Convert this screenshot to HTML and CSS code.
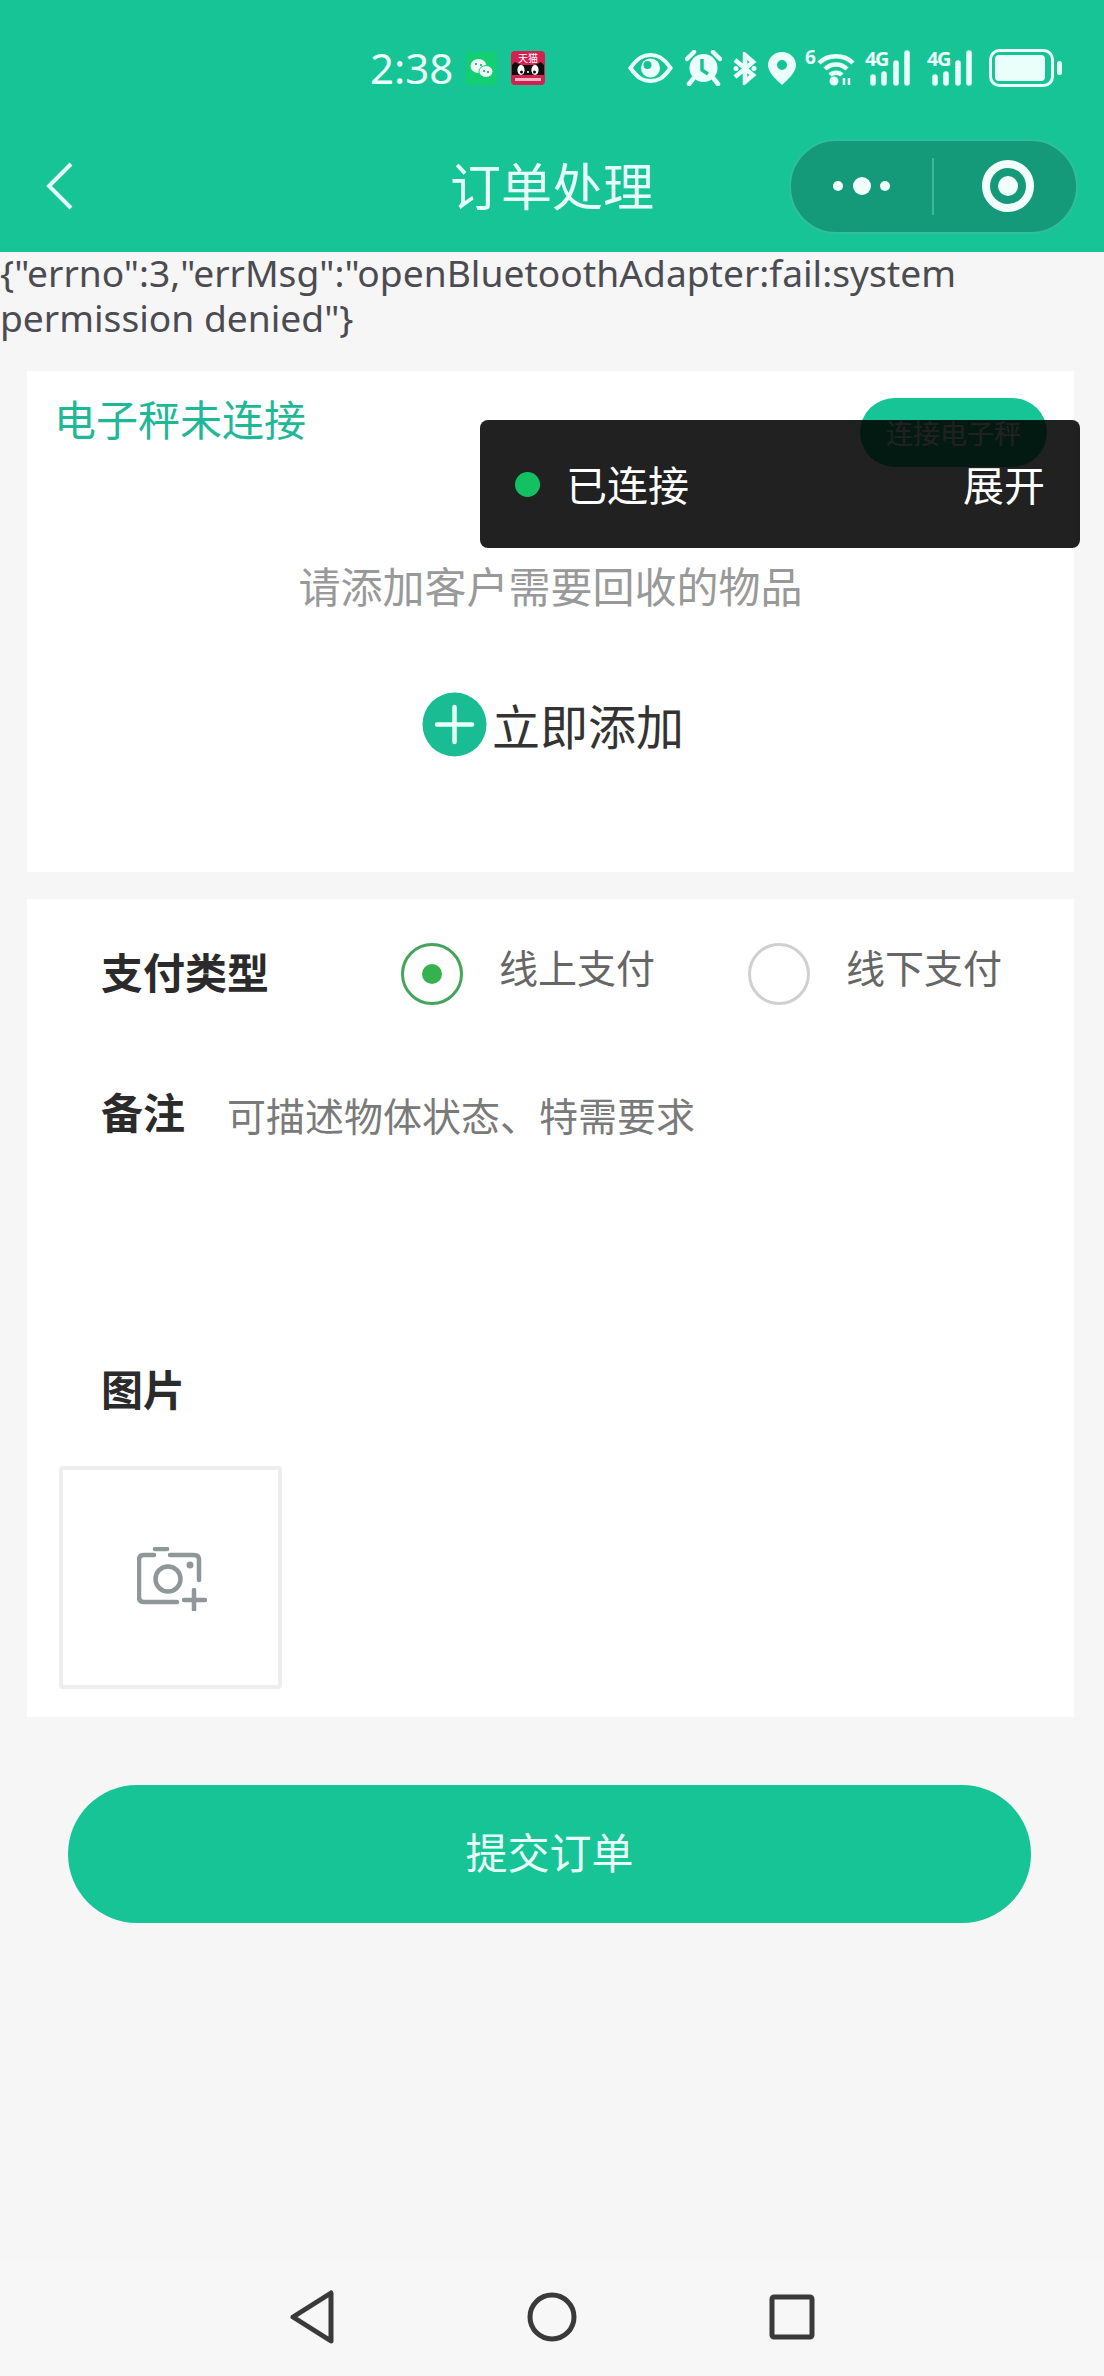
FILE: index.html
```html
<!DOCTYPE html>
<html lang="zh-CN">
<head>
<meta charset="utf-8">
<title>订单处理</title>
<link rel="stylesheet" href="styles.css">
</head>
<body>
<div class="page">
  <header class="header">
    <div class="status">
      <span class="time">2:38</span>
      <svg class="st-wechat" width="31" height="33" viewBox="0 0 31 33"><rect width="31" height="33" rx="3" fill="#12cf73"/><ellipse cx="12.5" cy="14" rx="8" ry="7" fill="#eefbf4"/><ellipse cx="20" cy="19.5" rx="7" ry="6" fill="#eefbf4" stroke="#12cf73"/><circle cx="10" cy="12" r="1" fill="#12a060"/><circle cx="15" cy="13" r="1" fill="#12a060"/><circle cx="18" cy="19" r="1" fill="#12a060"/><circle cx="22" cy="20" r="1" fill="#12a060"/></svg>
      <svg class="st-tmall" width="34" height="34" viewBox="0 0 34 34"><rect width="34" height="34" rx="4" fill="#d4204f"/><path d="M1 24 V14 L4 11 L10 14 H24 L30 11 L33 14 V24Z" fill="#0e0e0e"/><text x="17" y="10.500" class="tm-text" text-anchor="middle">天猫</text><ellipse cx="10" cy="19" rx="3.600" ry="5" fill="#fff"/><ellipse cx="24" cy="19" rx="3.600" ry="5" fill="#fff"/><circle cx="10.500" cy="21" r="1.500" fill="#0e0e0e"/><circle cx="23.500" cy="21" r="1.500" fill="#0e0e0e"/><circle cx="17" cy="21" r="1" fill="#fff"/><rect x="4" y="27" width="26" height="3" fill="#f3b4c5"/></svg>
      <svg class="st-eye" width="45" height="32" viewBox="0 0 45 32"><path d="M2.500 16 C10 5 16 3 22.500 3 C29 3 35 5 42.500 16 C35 27 29 29 22.500 29 C16 29 10 27 2.500 16Z" fill="none" stroke="#eafff9" stroke-width="4"/><circle cx="22.500" cy="16" r="9.500" fill="#eafff9"/><circle cx="19.500" cy="13" r="4" fill="#17c495"/></svg>
      <svg class="st-alarm" width="37" height="36" viewBox="0 0 37 36"><path d="M2 9 L9 2 M35 9 L28 2" stroke="#eafff9" stroke-width="4.500" stroke-linecap="round"/><circle cx="18.500" cy="18" r="14" fill="#eafff9"/><path d="M17 9 V20 L23 24" fill="none" stroke="#17c495" stroke-width="3.500"/><path d="M8 29 L4 34 M29 29 L33 34" stroke="#eafff9" stroke-width="4.500" stroke-linecap="round"/></svg>
      <svg class="st-bt" width="26" height="33" viewBox="0 0 26 33"><path d="M3 8 L21 23 L13 30 V3 L21 10 L3 25" fill="none" stroke="#eafff9" stroke-width="4.500"/><circle cx="4" cy="16.500" r="2.500" fill="#eafff9"/><circle cx="22" cy="16.500" r="2.500" fill="#eafff9"/></svg>
      <svg class="st-pin" width="30" height="35" viewBox="0 0 30 35"><path fill-rule="evenodd" d="M15 1 C7 1 1 7 1 14 C1 22 10 29 15 34 C20 29 29 22 29 14 C29 7 23 1 15 1Z M15 9 A5 5 0 1 1 15 19 A5 5 0 1 1 15 9Z" fill="#eafff9"/></svg>
      <span class="st-wifi">
        <span class="st-six">6</span>
        <svg width="38" height="36" viewBox="0 0 38 36"><path d="M2 12 C11 3 27 3 36 12 M8 18 C14 12 24 12 30 18 M13 24 C16 21 22 21 25 24" fill="none" stroke="#eafff9" stroke-width="4.500"/><circle cx="17" cy="30" r="4.500" fill="#eafff9"/><path d="M27 27 V34 M32 27 V34" stroke="#eafff9" stroke-width="2.500"/></svg>
      </span>
      <span class="st-signal">
        <span class="st-4g">4G</span>
        <svg width="50" height="36" viewBox="0 0 50 36"><path d="M8 27 V33 M19 24 V33 M31 13 V33 M42 3 V33" stroke="#eafff9" stroke-width="5.500" stroke-linecap="round"/></svg>
      </span>
      <span class="st-signal st-signal-two">
        <span class="st-4g">4G</span>
        <svg width="50" height="36" viewBox="0 0 50 36"><path d="M8 27 V33 M19 24 V33 M31 13 V33 M42 3 V33" stroke="#eafff9" stroke-width="5.500" stroke-linecap="round"/></svg>
      </span>
      <svg class="st-batt" width="74" height="38" viewBox="0 0 74 38"><rect x="1.500" y="1.500" width="62" height="35" rx="9" fill="none" stroke="#eafff9" stroke-width="3"/><rect x="6" y="6" width="50" height="26" rx="4" fill="#eafff9"/><rect x="68" y="12" width="5" height="14" rx="2.500" fill="#eafff9"/></svg>
    </div>
    <nav class="nav">
      <div class="nav-left">
        <svg width="27" height="48" viewBox="0 0 27 48"><path d="M25 2 L3 24 L25 46" fill="none" stroke="#e6fff8" stroke-width="4"/></svg>
      </div>
      <div class="nav-title">订单处理</div>
      <div class="nav-right">
        <div class="capsule">
          <span class="cap-half">
            <svg width="60" height="20" viewBox="0 0 60 20"><circle cx="6" cy="10" r="5" fill="#f2fffb"/><circle cx="30" cy="10" r="9" fill="#f2fffb"/><circle cx="53" cy="10" r="5" fill="#f2fffb"/></svg>
          </span>
          <span class="cap-line"></span>
          <span class="cap-half cap-half-right">
            <svg width="54" height="54" viewBox="0 0 54 54"><circle cx="27" cy="27" r="22" fill="none" stroke="#f2fffb" stroke-width="8"/><circle cx="27" cy="27" r="10" fill="#f2fffb"/></svg>
          </span>
        </div>
      </div>
    </nav>
  </header>

  <p class="err">{"errno":3,"errMsg":"openBluetoothAdapter:fail:system permission denied"}</p>

  <section class="card card-add">
    <div class="scale-row">
      <span class="scale-state">电子秤未连接</span>
      <span class="scale-btn">连接电子秤</span>
    </div>
    <div class="hint">请添加客户需要回收的物品</div>
    <div class="add-row">
      <svg class="add-ico" width="65" height="65" viewBox="0 0 65 65"><circle cx="32.500" cy="32.500" r="32" fill="#1abc94"/><path d="M15 32.500 H50 M32.500 15 V50" stroke="#e9fff9" stroke-width="4.500" stroke-linecap="round"/></svg>
      <span class="add-text">立即添加</span>
    </div>
  </section>

  <section class="card card-form">
    <div class="pay-row">
      <span class="f-label pay-label">支付类型</span>
      <div class="pay-opts">
        <div class="pay-opt">
          <span class="radio radio-on"><span class="radio-dot"></span></span>
          <span class="pay-text">线上支付</span>
        </div>
        <div class="pay-opt">
          <span class="radio"></span>
          <span class="pay-text">线下支付</span>
        </div>
      </div>
    </div>
    <div class="note-row">
      <span class="f-label">备注</span>
      <span class="note-ph">可描述物体状态、特需要求</span>
    </div>
    <div class="f-label img-label">图片</div>
    <div class="upload">
      <svg width="70" height="64" viewBox="0 0 70 64"><path d="M17 8 H7 Q2 8 2 13 V50 Q2 55 7 55 H40 M33 8 H57 Q62 8 62 13 V33 M18 2 H30" fill="none" stroke="#8f9799" stroke-width="4.500" stroke-linecap="round"/><circle cx="31" cy="32" r="12.500" fill="none" stroke="#8f9799" stroke-width="4.500"/><circle cx="53" cy="18" r="3.500" fill="#8f9799"/><path d="M47 53 H68 M57 43 V63" stroke="#8f9799" stroke-width="4.500" stroke-linecap="round"/></svg>
    </div>
  </section>

  <div class="submit">提交订单</div>

  <div class="sysnav">
    <svg width="60" height="56" viewBox="0 0 60 56"><path d="M11 28 L49 4 V52Z" fill="none" stroke="#3a3a3a" stroke-width="5" stroke-linejoin="round"/></svg>
    <svg width="60" height="56" viewBox="0 0 60 56"><circle cx="30" cy="28" r="22" fill="none" stroke="#3a3a3a" stroke-width="5"/></svg>
    <svg width="60" height="56" viewBox="0 0 60 56"><rect x="10" y="8" width="40" height="40" rx="2" fill="none" stroke="#3a3a3a" stroke-width="5"/></svg>
  </div>

  <div class="toast">
    <span class="toast-dot"></span>
    <span class="toast-text">已连接</span>
    <span class="toast-more">展开</span>
  </div>
</div>
</body>
</html>
```
FILE: styles.css
```css
* { box-sizing: border-box; }
html, body { margin: 0; padding: 0; }
body {
  font-family: "Noto Sans CJK SC", "Noto Sans", sans-serif;
  background: #f6f6f7;
}
.page {
  position: relative;
  width: 1104px;
  height: 2376px;
  display: flex;
  flex-direction: column;
  overflow: hidden;
}

/* header */
.header { height: 252px; background: #17c495; color: #e6fff8; }
.status {
  height: 120px;
  padding: 16px 0 0 370px;
  display: flex;
  align-items: center;
}
.time { font-family: "Noto Sans", sans-serif; font-size: 42px; line-height: 40px; width: 82px; color: #eafff9; }
.st-wechat { margin-left: 14px; }
.st-tmall { margin-left: 14px; }
.st-eye { margin-left: 83px; }
.st-alarm { margin-left: 12px; }
.st-bt { margin-left: 10px; }
.st-pin { margin-left: 9px; }
.st-wifi { margin-left: 8px; width: 50px; height: 38px; display: flex; align-items: flex-end; position: relative; }
.st-six { font-family: "Noto Sans", sans-serif; font-size: 19px; font-weight: 700; line-height: 16px; width: 12px; align-self: flex-start; color: #eafff9; }
.st-signal { margin-left: 10px; width: 50px; height: 36px; position: relative; display: block; }
.st-signal-two { margin-left: 12px; }
.st-4g {
  position: absolute;
  left: 0;
  top: 0;
  font-family: "Noto Sans", sans-serif;
  font-size: 20px;
  font-weight: 700;
  letter-spacing: -1.500px;
  line-height: 18px;
  color: #eafff9;
}
.st-batt { margin-left: 12px; }
.tm-text { font-size: 10px; fill: #fff; font-family: "Noto Sans CJK SC", sans-serif; }

.nav {
  height: 132px;
  display: grid;
  grid-template-columns: 1fr auto 1fr;
  align-items: center;
}
.nav-left { padding-left: 46px; display: flex; align-items: center; }
.nav-title { font-size: 51px; line-height: 60px; margin-bottom: 4px; }
.nav-right { display: flex; justify-content: flex-end; padding-right: 26px; }
.capsule {
  width: 289px;
  height: 95px;
  border-radius: 48px;
  background: #149a79;
  border: 2px solid #30bf9e;
  display: flex;
  align-items: center;
}
.cap-half { flex: 1; display: flex; justify-content: center; align-items: center; padding-left: 3px; }
.cap-half-right { padding-left: 6px; }
.cap-line { width: 2px; height: 57px; margin-left: 2px; background: #3fb79a; }

/* error */
.err {
  margin: -2px 0 2px;
  font-family: "Noto Sans", sans-serif;
  font-size: 37.200px;
  line-height: 45px;
  height: 88px;
  color: #4b4b52;
}

/* cards */
.card { margin: 31px 30px 0 27px; background: #fff; }
.card-add { height: 501px; padding-top: 27px; }
.card-form { margin-top: 27px; padding: 44px 0 28px; height: 818px; }
.scale-row {
  display: flex;
  justify-content: space-between;
  align-items: flex-start;
  padding: 0 27px 0 27px;
}
.scale-state { font-size: 42px; line-height: 40px; color: #1fb897; }
.scale-btn {
  width: 187px;
  height: 69px;
  border-radius: 35px;
  background: #17c495;
  color: #fff;
  font-size: 27px;
  line-height: 69px;
  text-align: center;
}
.hint { margin-top: 88px; text-align: center; font-size: 42px; line-height: 60px; color: #999; }
.add-row { margin-top: 77px; padding-left: 5px; display: flex; justify-content: center; align-items: center; gap: 5px; }
.add-text { font-size: 48px; line-height: 65px; color: #333; }

/* form */
.pay-row { display: flex; align-items: center; padding-left: 74px; height: 62px; }
.f-label { font-size: 42px; line-height: 60px; font-weight: 700; color: #2b2b2b; white-space: nowrap; flex-shrink: 0; }
.pay-label { margin-bottom: 6px; }
.pay-opts { display: flex; margin-left: 132px; }
.pay-opt { width: 347px; display: flex; align-items: center; gap: 36px; }
.radio {
  width: 62px;
  height: 62px;
  flex-shrink: 0;
  border-radius: 50%;
  border: 3px solid #d0d0d0;
  display: flex;
  align-items: center;
  justify-content: center;
}
.radio-on { border-color: #44a55a; }
.radio-dot { width: 20px; height: 20px; border-radius: 50%; background: #35b24f; }
.pay-text { font-size: 39px; line-height: 50px; color: #666; margin-bottom: 16px; }
.note-row { margin-top: 73px; padding-left: 74px; display: flex; align-items: center; }
.note-ph { margin-left: 42px; margin-top: 6px; font-size: 39px; line-height: 60px; color: #7a7a7a; }
.img-label { margin-top: 214px; padding-left: 74px; }
.upload {
  margin: 48px 0 0 32px;
  width: 223px;
  height: 223px;
  padding: 3px 0 0 2px;
  border: 4px solid #eeeeee;
  border-radius: 4px;
  display: flex;
  align-items: center;
  justify-content: center;
}

/* submit */
.submit {
  margin: 68px 0 0 68px;
  width: 963px;
  height: 138px;
  border-radius: 69px;
  background: #17c495;
  color: #e8fff8;
  font-size: 42px;
  line-height: 132px;
  text-align: center;
}

/* system nav */
.sysnav {
  margin-top: auto;
  height: 118px;
  padding-top: 31px;
  display: flex;
  justify-content: center;
  gap: 180px;
  background: #f7f7f7;
}

/* toast */
.toast {
  position: absolute;
  left: 480px;
  top: 420px;
  width: 600px;
  height: 128px;
  padding: 0 35px 0 35px;
  border-radius: 8px;
  background: rgba(0, 0, 0, 0.87);
  display: flex;
  align-items: center;
  color: #fff;
}
.toast-dot { width: 25px; height: 25px; border-radius: 50%; background: #12c262; }
.toast-text { margin-left: 26px; margin-bottom: 2px; font-size: 41px; line-height: 60px; }
.toast-more { margin-left: auto; margin-bottom: 2px; font-size: 41px; line-height: 60px; }
```
